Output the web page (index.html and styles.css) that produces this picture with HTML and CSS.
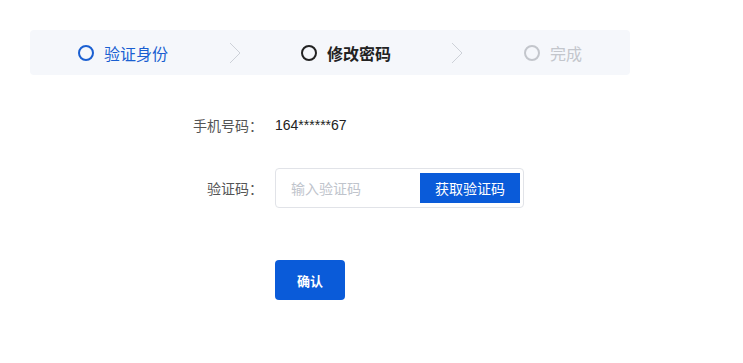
FILE: index.html
```html
<!DOCTYPE html>
<html lang="zh-CN">
<head>
<meta charset="utf-8">
<title>修改密码</title>
<link rel="stylesheet" href="styles.css">
</head>
<body>
<div class="page">
  <div class="steps">
    <div class="step step-done">
      <span class="step-circle"></span>
      <span class="step-text">验证身份</span>
    </div>
    <svg class="chev" width="12" height="22" viewBox="0 0 12 22"><polyline points="1,1 11,11 1,21" fill="none" stroke="#cdd1d8" stroke-width="1"/></svg>
    <div class="step step-active">
      <span class="step-circle"></span>
      <span class="step-text">修改密码</span>
    </div>
    <svg class="chev" width="12" height="22" viewBox="0 0 12 22"><polyline points="1,1 11,11 1,21" fill="none" stroke="#cdd1d8" stroke-width="1"/></svg>
    <div class="step step-todo">
      <span class="step-circle"></span>
      <span class="step-text">完成</span>
    </div>
  </div>

  <div class="form">
    <div class="row row-phone">
      <div class="label">手机号码：</div>
      <div class="value">164******67</div>
    </div>
    <div class="row row-code">
      <div class="label">验证码：</div>
      <div class="code-box">
        <span class="placeholder">输入验证码</span>
        <button class="get-code">获取验证码</button>
      </div>
    </div>
    <div class="row row-submit">
      <div class="label"></div>
      <button class="confirm">确认</button>
    </div>
  </div>
</div>
</body>
</html>
```

FILE: styles.css
```css
* { box-sizing: border-box; }
html, body {
  margin: 0;
  padding: 0;
  background: #ffffff;
}
body {
  font-family: "Liberation Sans", "Noto Sans CJK SC", sans-serif;
  color: #222;
}
.page {
  padding: 30px;
}
.steps {
  width: 600px;
  height: 45px;
  background: #f5f7fb;
  border-radius: 4px;
  display: flex;
  align-items: center;
  justify-content: space-between;
  padding: 0 48px;
}
.step {
  display: flex;
  align-items: center;
  gap: 10px;
  font-family: "Noto Sans CJK SC", sans-serif;
  font-size: 16px;
  line-height: 22px;
}
.step-circle {
  width: 16px;
  height: 16px;
  border-radius: 50%;
  border: 2.5px solid currentColor;
}
.step-done { color: #1a5fd1; }
.step-active { color: #222; font-weight: 700; }
.step-todo { color: #c3c6cc; }
.chev { display: block; }

.form {
  margin-top: 30px;
  display: flex;
  flex-direction: column;
}
.row {
  display: flex;
  align-items: center;
  gap: 12px;
  height: 40px;
}
.row-code { margin-top: 23px; }
.row-submit { margin-top: 52px; }
.label {
  width: 233px;
  text-align: right;
  font-family: "Noto Sans CJK SC", sans-serif;
  font-size: 14px;
  color: #555;
}
.value {
  font-size: 14px;
  color: #222;
}
.code-box {
  width: 249px;
  height: 40px;
  border: 1px solid #e1e3e8;
  border-radius: 4px;
  display: flex;
  align-items: center;
  justify-content: space-between;
  padding: 0 3px 0 15px;
}
.placeholder {
  font-family: "Noto Sans CJK SC", sans-serif;
  font-size: 14px;
  color: #c0c4cc;
}
.get-code {
  width: 100px;
  height: 30px;
  border: none;
  background: #0a5bd9;
  color: #fff;
  font-family: "Noto Sans CJK SC", sans-serif;
  font-size: 14px;
  padding: 0;
}
.confirm {
  width: 70px;
  height: 40px;
  border: none;
  border-radius: 4px;
  background: #0a5bd9;
  color: #fff;
  font-family: "Noto Sans CJK SC", sans-serif;
  font-size: 13px;
  font-weight: 600;
  padding: 0;
}
```
